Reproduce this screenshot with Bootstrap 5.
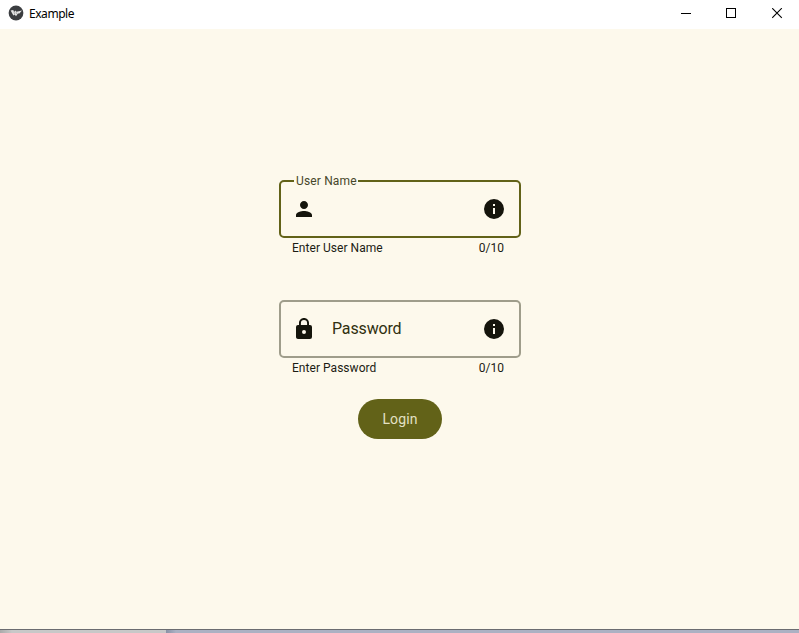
<!DOCTYPE html>
<html lang="en">
<head>
<meta charset="utf-8">
<meta name="viewport" content="width=device-width, initial-scale=1">
<title>Example</title>
<link href="https://cdn.jsdelivr.net/npm/bootstrap@5.3.0/dist/css/bootstrap.min.css" rel="stylesheet">
<style>
  body { font-family: Roboto, sans-serif; color: #1c1c14; background: #fff; font-size: 12px; line-height: 14px; }
  .titlebar { height: 29px; flex: none; padding: 0 16px 3px 8px; color: #000; font-family: "Noto Sans", "Open Sans", sans-serif; }
  .win-title { font-size: 12px; letter-spacing: -.45px; line-height: 16px; margin-left: 5px; padding-top: 2px; }
  .win-controls { gap: 35px; }
  .app-area { background: #fdf9ec; padding-top: 151px; padding-left: 1px; min-height: 0; }
  .text-box { width: 242px; height: 58px; border: 2px solid #9f9d8b; border-radius: 5px; padding: 0 13px; }
  .text-box.focused { border-color: #626218; }
  .field-block { width: 242px; height: 120px; }
  .float-label { top: -9px; left: 13px; padding: 1px 1px 0 2px; line-height: 14px; background: #fdf9ec; color: #47472a; letter-spacing: .15px; white-space: nowrap; }
  .field-label { font-size: 16px; line-height: 20px; color: #303010; margin-left: 18px; letter-spacing: -.15px; }
  .helper { padding: 3px 17px 0 13px; letter-spacing: .04px; }
  .login-btn, .login-btn:hover { width: 84px; height: 40px; margin-top: -21px; background: #626218; color: #e3e1c4; font-size: 14px; line-height: 20px; letter-spacing: .1px; }
  .bottom-edge { height: 4px; flex: none; border-top: 1px solid #6b6c70; background: linear-gradient(90deg, #aaa 0, #c8c8c8 12px, #c8c8c8 166px, #8991a6 166px, #acb1c3 176px, #acb1c3 100%); }
  svg { display: block; flex: none; }
</style>
<script src="https://cdn.jsdelivr.net/npm/bootstrap@5.3.0/dist/js/bootstrap.bundle.min.js"></script>
</head>
<body class="vh-100 overflow-hidden d-flex flex-column">
<header class="titlebar d-flex align-items-center">
  <svg width="16" height="16" viewBox="0 0 16 16"><circle cx="8" cy="8" r="7.4" fill="#3b3d40"/><path d="M2.6 5.4 5.2 5.1 6.3 6.9 7.2 5.6 8.4 6.8 14 5.6 11.4 8.5 9.9 8.6 8 11.3 6.7 9.6 5.4 10.5Z" fill="#e4e4e4"/><path d="M5.8 6.5 6.7 9M8.1 7 8.5 9" stroke="#777" stroke-width=".5"/></svg>
  <span class="win-title">Example</span>
  <div class="win-controls d-flex align-items-center ms-auto">
    <svg width="11" height="11" viewBox="0 0 11 11"><path d="M1 5.5h10" stroke="#000"/></svg>
    <svg width="11" height="11" viewBox="0 0 11 11" shape-rendering="crispEdges"><path d="M.5.5h9v9h-9z" fill="none" stroke="#000"/></svg>
    <svg width="11" height="11" viewBox="0 0 11 11"><path d="m.2.2 9.6 9.6m0-9.6-9.6 9.6" stroke="#000" stroke-width="1.1"/></svg>
  </div>
</header>
<main class="app-area flex-grow-1 d-flex flex-column align-items-center">
  <section class="field-block">
    <div class="text-box focused position-relative d-flex align-items-center">
      <span class="float-label position-absolute">User Name</span>
      <svg width="20" height="24" viewBox="2 0 20 24" fill="#15150c"><path d="M12 12c2.21 0 4-1.79 4-4s-1.79-4-4-4-4 1.79-4 4 1.79 4 4 4zm0 2c-2.67 0-8 1.34-8 4v2h16v-2c0-2.66-5.33-4-8-4z"/></svg>
      <svg class="ms-auto" width="24" height="24" viewBox="0 0 24 24" fill="#15150c"><path d="M12 2a10 10 0 1 0 0 20 10 10 0 0 0 0-20zm1 15h-2v-6h2v6zm0-8h-2V7h2v2z"/></svg>
    </div>
    <div class="helper d-flex justify-content-between"><span>Enter User Name</span><span class="count">0/10</span></div>
  </section>
  <section class="field-block">
    <div class="text-box d-flex align-items-center">
      <svg width="20" height="24" viewBox="2 0 20 24" fill="#15150c"><path d="M18 8h-1V6c0-2.76-2.24-5-5-5S7 3.24 7 6v2H6a2 2 0 0 0-2 2v10c0 1.1.9 2 2 2h12a2 2 0 0 0 2-2V10a2 2 0 0 0-2-2zm-6 9a2 2 0 1 1 0-4 2 2 0 0 1 0 4zm3.1-9H8.9V6a3.1 3.1 0 0 1 6.2 0v2z"/></svg>
      <span class="field-label">Password</span>
      <svg class="ms-auto" width="24" height="24" viewBox="0 0 24 24" fill="#15150c"><path d="M12 2a10 10 0 1 0 0 20 10 10 0 0 0 0-20zm1 15h-2v-6h2v6zm0-8h-2V7h2v2z"/></svg>
    </div>
    <div class="helper d-flex justify-content-between"><span>Enter Password</span><span class="count">0/10</span></div>
  </section>
  <button type="button" class="login-btn btn rounded-pill border-0 p-0">Login</button>
</main>
<footer class="bottom-edge"></footer>
</body>
</html>
